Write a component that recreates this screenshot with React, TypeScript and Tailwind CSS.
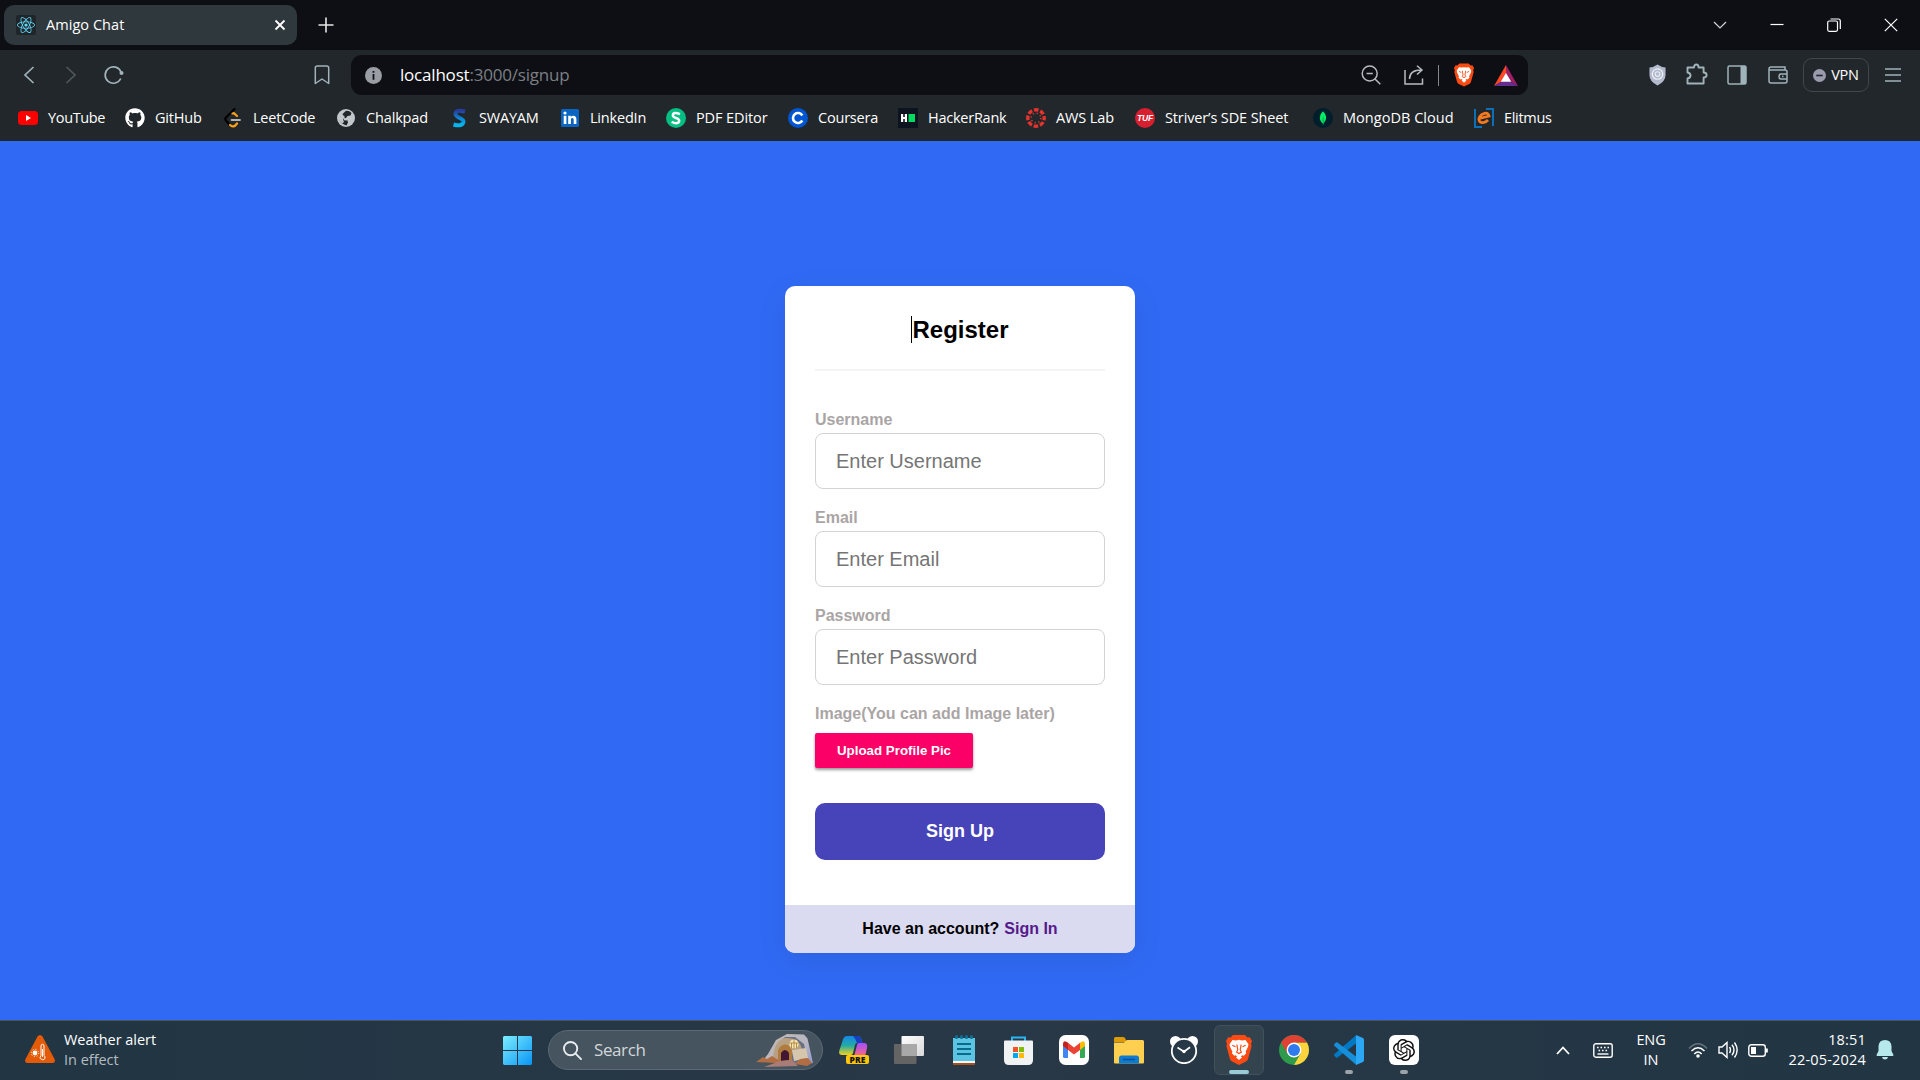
import type { ReactNode } from "react";
import { FaGithub, FaReact } from "react-icons/fa";
import { SiMongodb, SiOpenai } from "react-icons/si";

function BraveMark({ className }: { className: string }) {
  return (
    <svg viewBox="0 0 26 30" className={className}>
      <path d="M7 0h12l2.500 2.600 2.300-.3L26 6l-1 3 .6 2-3.400 12.500c-.4 1.400-1.200 2.400-2.300 3.100L13 30l-6.900-3.400c-1.100-.7-1.900-1.700-2.300-3.100L.4 11 1 9 0 6l2.200-3.700 2.300.3z" fill="#fb4a12" />
      <path d="M13 4.800l3 .6 3.500-.4 3 4.200-.5 2.600-2.300 4.700.3 2.100-2.300 2.200-1.700-.5-3 3.500-3-3.500-1.700.5L6 18.600l.3-2.100L4 11.800l-.5-2.600 3-4.200 3.500.4z" fill="#fff" />
      <path d="M10.800 9.500L11.800 15l-1.200 2L13 18.500 15.400 17l-1.200-2 1-5.500M6.300 10.300l3.200 1.500M19.700 10.300l-3.200 1.500" stroke="#fb4a12" strokeWidth="1.200" fill="none" />
      <path d="M9.800 22.300l3.200-1.800 3.200 1.800L13 25z" fill="#fff" />
    </svg>
  );
}

const bookmarks: { label: string; cell: string; text: string; icon: ReactNode }[] = [
  {
    label: "YouTube",
    cell: "w-[107px]",
    text: "tracking-[-0.35px]",
    icon: (
      <svg viewBox="0 0 20 20" className="size-5">
        <rect y="3" width="20" height="14" rx="3.500" fill="#f00" />
        <path d="M8 7v6l5-3z" fill="#fff" />
      </svg>
    ),
  },
  { label: "GitHub", cell: "w-[98px]", text: "", icon: <FaGithub className="size-5 text-white" /> },
  {
    label: "LeetCode",
    cell: "w-[113px]",
    text: "",
    icon: (
      <svg viewBox="0 0 20 20" className="size-5" fill="none" strokeWidth="2.200" strokeLinecap="round">
        <path d="M11.500 1L3 9.500q-1.500 1.500 0 3l4 5" stroke="#000" />
        <path d="M9.500 5.500l1.500-.3L14 8M7 17q3.500 3.500 7-1.500" stroke="#ffa116" />
        <path d="M8.500 12H17" stroke="#b3b3b3" strokeWidth="1.800" />
      </svg>
    ),
  },
  {
    label: "Chalkpad",
    cell: "w-[113px]",
    text: "tracking-[-0.15px]",
    icon: (
      <svg viewBox="0 0 20 20" className="size-5">
        <circle cx="10" cy="10" r="9" fill="#c2c7cb" />
        <path d="M10 2.800q3.500-.3 5.500 2.200l-1 2.500-3 .5-1.500 2-2.500.3.500 2 3.500.2.500 2-1.500 3Q5 15.500 3.500 12l-.7-2.500 3.200.7 1.500-2L6.500 6z" fill="#22272b" />
        <path d="M3 8l4.500-.5 1.500 1.500-2 2.500L8 14l-2 1.500L3 12z" fill="#c2c7cb" />
      </svg>
    ),
  },
  {
    label: "SWAYAM",
    cell: "w-[111px]",
    text: "",
    icon: (
      <svg viewBox="0 0 20 20" className="size-5">
        <defs>
          <linearGradient id="swayam" x1="0" y1="0" x2="0" y2="1">
            <stop stopColor="#283c9b" />
            <stop offset=".6" stopColor="#078fdc" />
            <stop offset="1" stopColor="#06b7ee" />
          </linearGradient>
        </defs>
        <path d="M16 3.500Q6.300 1 6.500 6c.2 4 8.500 4 8 7.600Q13.500 19 4.500 16.500" fill="none" stroke="url(#swayam)" strokeWidth="4" />
      </svg>
    ),
  },
  {
    label: "LinkedIn",
    cell: "w-[106px]",
    text: "",
    icon: (
      <svg viewBox="0 0 20 20" className="size-5">
        <rect x="1" y="1" width="18" height="18" rx="1.500" fill="#0a66c2" />
        <circle cx="5" cy="5" r="1.600" fill="#fff" />
        <path d="M3.700 7.800h2.700V16H3.700zM8.200 7.800h2.600v1.200c1.300-2.100 5.600-2 5.600 2.300V16h-2.700v-4.200c0-2.500-2.800-2.300-2.800 0V16H8.200z" fill="#fff" />
      </svg>
    ),
  },
  {
    label: "PDF EDitor",
    cell: "w-[122px]",
    text: "tracking-[-0.1px]",
    icon: (
      <svg viewBox="0 0 20 20" className="size-5">
        <circle cx="10" cy="10" r="10" fill="#06be82" />
        <path d="M14 6.200Q7 3.300 6.900 7.400c0 3 6.300 2.100 6.300 5.200 0 3.700-4.800 3-7.500 1.200" fill="none" stroke="#fff" strokeWidth="2.500" />
      </svg>
    ),
  },
  {
    label: "Coursera",
    cell: "w-[110px]",
    text: "",
    icon: (
      <svg viewBox="0 0 20 20" className="size-5">
        <circle cx="10" cy="10" r="10" fill="#0056d2" />
        <path d="M14.300 12.500a5 5 0 1 1 0-5" fill="none" stroke="#fff" strokeWidth="2.600" />
      </svg>
    ),
  },
  {
    label: "HackerRank",
    cell: "w-[128px]",
    text: "tracking-[-0.25px]",
    icon: (
      <svg viewBox="0 0 20 20" className="size-5">
        <path d="M0 0h20v20H0z" fill="#0b141f" />
        <path d="M3 6h2.200v3h1.600V6H9v8H6.800v-3H5.200v3H3z" fill="#fff" />
        <path d="M10.500 6H17v8h-6.500z" fill="#05d95f" />
      </svg>
    ),
  },
  {
    label: "AWS Lab",
    cell: "w-[109px]",
    text: "tracking-[-0.1px]",
    icon: (
      <svg viewBox="0 0 20 20" className="size-5">
        <circle cx="10" cy="10" r="8.200" fill="none" stroke="#e4342b" strokeWidth="3.400" strokeDasharray="4.600 1.840" strokeDashoffset="2.300" />
        <circle cx="10" cy="10" r="4.800" fill="none" stroke="#e4342b" strokeWidth="1.400" strokeDasharray="1.300 2.470" />
      </svg>
    ),
  },
  {
    label: "Striver’s SDE Sheet",
    cell: "w-[178px]",
    text: "tracking-[-0.13px]",
    icon: (
      <span className="flex size-5 items-center justify-center rounded-full bg-[#d81f30] font-['Liberation_Sans'] text-[8.5px] font-bold tracking-[-0.1px] text-white italic">
        TUF
      </span>
    ),
  },
  {
    label: "MongoDB Cloud",
    cell: "w-[161px]",
    text: "tracking-[0.03px]",
    icon: (
      <span className="flex size-5 items-center justify-center rounded-full bg-[#001e2b]">
        <SiMongodb className="size-3.5 text-[#00ed64]" />
      </span>
    ),
  },
  {
    label: "Elitmus",
    cell: "w-[100px]",
    text: "tracking-[-0.3px]",
    icon: (
      <svg viewBox="0 0 20 20" className="size-5">
        <path d="M1 1v18h7M12 1h7v17" fill="none" stroke="#0d6fb8" strokeWidth="2" />
        <path d="M5.500 10.500L15 8q-1-3.500-4.500-2.700C6 6.500 4 10.500 5.300 13c1.500 2.500 6 2 8.700-1" fill="none" stroke="#f47a20" strokeWidth="2.800" />
      </svg>
    ),
  },
];

function TabStrip() {
  return (
    <div className="flex h-[50px] items-center bg-[#0d0f14] pl-1 text-white">
      <div className="flex h-10 w-[293px] items-center rounded-[10px] bg-[#2f383d] pr-[11px] pl-3">
        <span className="flex size-5 items-center justify-center rounded-[2px] bg-[#20252a]">
          <FaReact className="size-[18px] text-[#61dafb]" />
        </span>
        <span className="ml-2.5 flex-1 text-[14.5px] tracking-[0.05px]">Amigo Chat</span>
        <svg viewBox="0 0 12 12" className="size-3" stroke="#fff" strokeWidth="1.800">
          <path d="M1.500 1.500l9 9M10.500 1.500l-9 9" />
        </svg>
      </div>
      <svg viewBox="0 0 16 16" className="ml-[21px] size-4" stroke="#e8e8e8" strokeWidth="1.600">
        <path d="M8 .500v15M.500 8h15" />
      </svg>
      <div className="ml-auto flex">
        <span className="flex w-[57px] justify-center">
          <svg viewBox="0 0 14 14" className="size-3.5" fill="none" stroke="#d5d5d5" strokeWidth="1.200">
            <path d="M1 4l6 6 6-6" />
          </svg>
        </span>
        <span className="flex w-[57px] justify-center">
          <svg viewBox="0 0 14 14" className="size-3.5" fill="none" stroke="#fff" strokeWidth="1.200">
            <path d="M.500 6.500h13" />
          </svg>
        </span>
        <span className="flex w-[57px] justify-center">
          <svg viewBox="0 0 14 14" className="size-3.5" fill="none" stroke="#fff" strokeWidth="1.200">
            <rect x=".7" y="3" width="9.800" height="10.300" rx="1.500" />
            <path d="M3.500 1h7.800q2 0 2 2v8" />
          </svg>
        </span>
        <span className="flex w-[58px] justify-center">
          <svg viewBox="0 0 14 14" className="size-3.5" fill="none" stroke="#fff" strokeWidth="1.200">
            <path d="M.800 .800l12.400 12.400M13.200 .800L.800 13.200" />
          </svg>
        </span>
      </div>
    </div>
  );
}

function Slot({ children, className }: { children: ReactNode; className: string }) {
  return <span className={`flex shrink-0 items-center justify-center ${className}`}>{children}</span>;
}

function Toolbar() {
  return (
    <div className="flex h-[50px] items-center pl-2">
      <Slot className="w-[42px]">
        <svg viewBox="0 0 12 18" className="h-[18px] w-3" fill="none" stroke="#a0b2ba" strokeWidth="1.700">
          <path d="M10.500 1L2 9l8.500 8" />
        </svg>
      </Slot>
      <Slot className="w-[42px]">
        <svg viewBox="0 0 12 18" className="h-[18px] w-3" fill="none" stroke="#4e575c" strokeWidth="1.700">
          <path d="M1.500 1L10 9l-8.500 8" />
        </svg>
      </Slot>
      <Slot className="w-11">
        <svg viewBox="0 0 20 20" className="size-5" fill="none" stroke="#a0b2ba" strokeWidth="1.700">
          <path d="M16.800 13.500A8.200 8.200 0 1 1 17 7" />
          <circle cx="17.500" cy="8" r="2" fill="#a0b2ba" stroke="none" />
        </svg>
      </Slot>
      <Slot className="ml-[165px] w-[42px]">
        <svg viewBox="0 0 16 20" className="h-5 w-4" fill="none" stroke="#a0b2ba" strokeWidth="1.500">
          <path d="M1.300 18.500V3q0-2 2-2h9.400q2 0 2 2v15.500L8 14z" strokeLinejoin="round" />
        </svg>
      </Slot>
      <div className="ml-2 flex h-10 w-[1177px] items-center rounded-[11px] bg-[#0d0f14] pl-[14px]">
        <svg viewBox="0 0 18 18" className="size-[17px]">
          <circle cx="9" cy="9" r="9" fill="#9a9da3" />
          <path d="M9 4.200v1.800M9 7.500v6" stroke="#0d0f14" strokeWidth="1.900" />
        </svg>
        <span className="ml-[18px] flex-1 pb-px text-[17px] tracking-[-0.2px] text-[#7c7f84]">
          <span className="text-white">localhost</span>:3000/signup
        </span>
        <Slot className="w-[43px]">
          <svg viewBox="0 0 20 20" className="size-5" fill="none" stroke="#b6bbbd" strokeWidth="1.500">
            <circle cx="8.700" cy="8.500" r="7.500" />
            <path d="M14 14l5.300 5.200M5.500 8.500h6.300" />
          </svg>
        </Slot>
        <Slot className="w-[43px]">
          <svg viewBox="0 0 20 20" className="size-5" fill="none" stroke="#b6bbbd" strokeWidth="1.500">
            <path d="M1 5v14h17.500v-5.500M5.500 14Q5.500 5 17.500 5M13 .8L18 5l-5 4.500" />
          </svg>
        </Slot>
        <span className="ml-[3px] h-[21px] w-px bg-[#85878a]" />
        <Slot className="ml-[3px] w-[43px]">
          <BraveMark className="h-6 w-5" />
        </Slot>
        <Slot className="mr-px w-[42px]">
          <svg viewBox="0 0 24 21" className="h-[21px] w-6">
            <path d="M12 0L0 21l12-7z" fill="#ff4724" />
            <path d="M12 0l12 21-12-7z" fill="#9e1f63" />
            <path d="M0 21h24l-12-7z" fill="#662d91" />
            <path d="M12 8l5.200 8.700H6.800z" fill="#fff" />
          </svg>
        </Slot>
      </div>
      <Slot className="ml-[109px] w-10">
        <svg viewBox="0 0 18 22" className="h-[22px] w-[17px]">
          <path d="M9 0q4 3 8.500 3v8q0 7-8.500 11Q.5 18 .5 11V3Q5 3 9 0z" fill="#b4bacd" />
          <circle cx="9" cy="10" r="5.500" fill="none" stroke="#eef0f5" strokeWidth="1.300" />
          <circle cx="9" cy="10" r="2.500" fill="none" stroke="#e8eaf2" strokeWidth="1.200" />
        </svg>
      </Slot>
      <Slot className="w-10">
        <svg viewBox="0 0 22 22" className="mb-0.5 size-[22px]" fill="none" stroke="#a0b2ba" strokeWidth="1.900" strokeLinejoin="round">
          <path d="M1.500 4.500H8q0-3 2.300-3t2.300 3h5v5q3 0 3 2.500t-3 2.500v6H1.500v-5q3-.5 3-3t-3-3z" />
        </svg>
      </Slot>
      <Slot className="w-10">
        <svg viewBox="0 0 20 20" className="size-5">
          <rect x="1" y="1" width="18" height="18" rx="1.500" fill="none" stroke="#a0b2ba" strokeWidth="1.500" />
          <path d="M13.500 1H19v18h-5.500z" fill="#a0b2ba" />
        </svg>
      </Slot>
      <Slot className="w-[42px]">
        <svg viewBox="0 0 20 20" className="size-5" fill="none" stroke="#a0b2ba" strokeWidth="1.500">
          <path d="M17 5V2H3Q1 2 1 4v12q0 2 2 2h14q2 0 2-2V7q0-2-2-2H1M19 9h-6q-2 0-2 2.500t2 2.500h6M14 11.500h1.500" />
        </svg>
      </Slot>
      <div className="ml-1 flex h-[34px] w-[66px] items-center justify-center gap-[5px] rounded-[9px] border border-[#3d474c] text-[14.5px] tracking-[-0.2px] text-white">
        <svg viewBox="0 0 12 12" className="size-[13px]">
          <circle cx="6" cy="6" r="6" fill="#9b9bb0" />
          <path d="M3 6h6" stroke="#22272b" strokeWidth="1.500" />
        </svg>
        VPN
      </div>
      <Slot className="w-12">
        <svg viewBox="0 0 16 14" className="h-3.5 w-4" stroke="#a0b2ba" strokeWidth="1.400">
          <path d="M0 1h16M0 7h16M0 13h16" />
        </svg>
      </Slot>
    </div>
  );
}

function Field({ label, placeholder, type }: { label: string; placeholder: string; type: string }) {
  return (
    <label className="mb-5 block h-[78px] text-base leading-[18px] font-bold text-[#aaa5a5]">
      {label}
      <input
        type={type}
        placeholder={placeholder}
        className="mt-1 block h-14 w-full rounded-lg border border-[#d3d3d3] bg-white px-5 text-xl font-normal placeholder:text-[#757575] placeholder:opacity-100"
      />
    </label>
  );
}

function SignupCard() {
  return (
    <div className="mt-[144.5px] h-[667.5px] w-[350px] overflow-hidden rounded-[10px] bg-white px-[30px] font-['Liberation_Sans',Arial,sans-serif] shadow-[0_8px_30px_rgba(0,0,0,0.08)]">
      <div className="flex h-[85.5px] justify-center border-b-[2.5px] border-[#f6f3f3] pt-[30.500px]">
        <h1 className="flex h-[27px] border-l border-black text-2xl leading-7 font-bold text-black">Register</h1>
      </div>
      <form className="pt-[40px]">
        <Field label="Username" placeholder="Enter Username" type="text" />
        <Field label="Email" placeholder="Enter Email" type="email" />
        <Field label="Password" placeholder="Enter Password" type="password" />
        <p className="text-base leading-[18px] font-bold text-[#aaa5a5]">Image(You can add Image later)</p>
        <button
          type="button"
          className="mt-[9.5px] block h-[35px] w-[158px] rounded-[2px] bg-[#fb0066] pt-px text-[13.33px] font-bold text-white shadow-[0_2px_3px_rgba(0,0,0,0.4)]"
        >
          Upload Profile Pic
        </button>
        <button type="button" className="mt-[35px] block h-[57px] w-full rounded-[10px] bg-[#4743b9] text-lg font-bold text-white">
          Sign Up
        </button>
      </form>
      <div className="-mx-[30px] mt-[45px] flex h-[48.5px] items-center justify-center gap-[5px] bg-[#dadaf0] pt-px text-base font-bold text-black">
        Have an account? <a className="text-[#551a8b]">Sign In</a>
      </div>
    </div>
  );
}

function TaskbarApps() {
  return (
    <div className="flex items-center">
      <Slot className="w-[55px]">
        <svg viewBox="0 0 30 28" className="h-[28px] w-[30px]">
          <defs>
            <linearGradient id="copA" x1="0" y1="0" x2="0" y2="1">
              <stop stopColor="#1687e8" />
              <stop offset=".5" stopColor="#23aaa5" />
              <stop offset="1" stopColor="#f1d020" />
            </linearGradient>
            <linearGradient id="copB" x1="0" y1="0" x2="0" y2="1">
              <stop stopColor="#a34dff" />
              <stop offset="1" stopColor="#ff6b75" />
            </linearGradient>
          </defs>
          <path d="M8 0h11q2.500 0 3.500 3.500L23.500 7H18q-1.500 0-2 2l-2 8q-.6 2-2 2H3q-4 0-2.500-5L4 3.500Q5 0 8 0z" fill="url(#copA)" />
          <path d="M14 0h5q2.500 0 3.500 3.500L23.500 7H18q-2-5-4-7z" fill="#1740c0" />
          <path d="M19 7h6q4 0 3 5l-2 9H13q2 0 3-4l2-8z" fill="url(#copB)" />
          <rect x="7" y="19" width="23" height="9" rx="2" fill="#fdc70c" />
          <text x="18.500" y="26.600" textAnchor="middle" fontFamily="Open Sans" fontSize="8.500" fontWeight="800" fill="#161616">PRE</text>
        </svg>
      </Slot>
      <Slot className="w-[55px]">
        <svg viewBox="0 0 30 28" className="h-[28px] w-[30px]">
          <defs>
            <linearGradient id="tv" x1="0" y1="0" x2="1" y2="1">
              <stop stopColor="#fff" />
              <stop offset="1" stopColor="#d8d8d8" />
            </linearGradient>
          </defs>
          <rect x="7.500" y="0" width="22.500" height="20" rx="1" fill="url(#tv)" />
          <rect x="0" y="8" width="22.500" height="20" rx="1" fill="#646464" />
          <path d="M7.500 8h15v12h-15z" fill="#a8a8a8" />
        </svg>
      </Slot>
      <Slot className="w-[55px]">
        <svg viewBox="0 0 22 30" className="h-[30px] w-[22px]">
          <rect y="20" width="22" height="10" rx="1" fill="#a4521c" />
          <path d="M0 20h22v8H0z" fill="#f5f5f5" />
          <path d="M0 3h22v23H0z" fill="#5bc4e3" />
          <path d="M4 9h14M4 14h14M4 19h14" stroke="#096a8c" strokeWidth="2" />
          <path d="M3.500 1.500v1M8.500 1.500v1M13.500 1.500v1M18.500 1.500v1" stroke="#0a6f92" strokeWidth="3" strokeLinecap="round" />
        </svg>
      </Slot>
      <Slot className="w-[55px]">
        <svg viewBox="0 0 29 29" className="size-[29px]">
          <path d="M8 6V1.500h13V6" fill="none" stroke="#29b6f2" strokeWidth="2" />
          <path d="M0 5.500q0-1 1-1h27q1 0 1 1V24q0 5-5 5H5q-5 0-5-5z" fill="#f1f2f3" />
          <path d="M9 11h5v5H9z" fill="#f35325" />
          <path d="M15 11h5v5h-5z" fill="#81bc06" />
          <path d="M9 17h5v5H9z" fill="#05a6f0" />
          <path d="M15 17h5v5h-5z" fill="#ffba08" />
        </svg>
      </Slot>
      <Slot className="w-[55px]">
        <svg viewBox="0 0 30 30" className="size-[30px]">
          <rect width="30" height="30" rx="6.500" fill="#fff" />
          <path d="M4 10.500l5 3.700V23H5.500Q4 23 4 21.500z" fill="#4285f4" />
          <path d="M26 10.500l-5 3.700V23h3.500q1.500 0 1.500-1.500z" fill="#34a853" />
          <path d="M21 7.800l1.500-1.100Q26 5 26 9v2l-5 4z" fill="#fbbc04" />
          <path d="M9 7.800L7.500 6.700Q4 5 4 9v2l5 4z" fill="#c5221f" />
          <path d="M9 7.800l6 4.700 6-4.700V15l-6 4.500L9 15z" fill="#ea4335" />
        </svg>
      </Slot>
      <Slot className="w-[55px]">
        <svg viewBox="0 0 30 27" className="h-[27px] w-[30px]">
          <path d="M0 1.500Q0 0 1.500 0h8q1.500 0 2.500 3l1 2H0z" fill="#dd9a05" />
          <path d="M0 5.500h10L13 3h15.500Q30 3 30 4.500V25.500q0 1-1 1H1q-1 0-1-1z" fill="#ffd050" />
          <path d="M5 26.500V21q0-2.500 2.500-2.500h15Q25 18.500 25 21v5.500z" fill="#0f7ad1" />
          <path d="M9 22.500h12" stroke="#075298" strokeWidth="1.500" />
        </svg>
      </Slot>
      <Slot className="w-[55px]">
        <svg viewBox="0 0 28 28" className="size-7">
          <circle cx="5.500" cy="5.500" r="5.500" fill="#fff" />
          <circle cx="22.500" cy="5.500" r="5.500" fill="#fff" />
          <circle cx="14" cy="15" r="12.200" fill="#273846" stroke="#fff" strokeWidth="1.800" />
          <path d="M7.500 11.500l6.500 4.200 6-4.500" fill="none" stroke="#fff" strokeWidth="1.800" />
          <circle cx="14" cy="15.500" r="1.700" fill="#fff" />
        </svg>
      </Slot>
      <Slot className="w-[55px]">
        <span className="flex h-[50px] w-[50px] flex-col items-center rounded-md border border-[#40505c] bg-[#34444f] pt-[9px]">
          <BraveMark className="h-[30px] w-[26px]" />
          <span className="mt-[5px] h-1 w-5 rounded-full bg-[#98cbd5]" />
        </span>
      </Slot>
      <Slot className="w-[55px]">
        <svg viewBox="0 0 30 30" className="size-[30px]">
          <circle cx="15" cy="15" r="15" fill="#2d9b4b" />
          <path d="M15 7.500H27.990A15 15 0 0 1 15 30L21.500 18.750z" fill="#fdd43c" />
          <path d="M2.010 7.500A15 15 0 0 1 27.990 7.500H15L8.500 18.750z" fill="#dd4235" />
          <circle cx="15" cy="15" r="7.400" fill="#fff" />
          <circle cx="15" cy="15" r="6" fill="#2f7bee" />
        </svg>
      </Slot>
      <Slot className="w-[55px]">
        <span className="flex h-[50px] flex-col items-center pt-[10px]">
          <svg viewBox="0 0 30 30" className="size-[30px]">
            <path d="M22 .3v8.200L3.500 22.500q-.8.500-1.500 0L.5 21q-1-1 0-2z" fill="#0079c4" />
            <path d="M22 29.700v-8.200L3.500 7.500Q2.700 7 2 7.500L.5 9q-1 1 0 2z" fill="#168fd8" />
            <path d="M22 0l7 3q1 .5 1 2v20q0 1.500-1 2l-7 3z" fill="#2ca7f5" />
          </svg>
          <span className="mt-[5px] h-1 w-2 rounded-full bg-[#9ba3a9]" />
        </span>
      </Slot>
      <Slot className="w-[55px]">
        <span className="flex h-[50px] flex-col items-center pt-[10px]">
          <span className="flex size-[30px] items-center justify-center rounded-md bg-white">
            <SiOpenai className="size-[22px] text-[#111]" />
          </span>
          <span className="mt-[5px] h-1 w-2 rounded-full bg-[#9ba3a9]" />
        </span>
      </Slot>
    </div>
  );
}

function Taskbar() {
  return (
    <div className="flex h-[60px] items-center border-t border-[#4a565c] bg-linear-to-r from-[#213543] via-[#293847] to-[#213543] pb-px text-white">
      <div className="flex w-[503px] items-center pl-[25px]">
        <svg viewBox="0 0 30 28" className="mb-0.5 h-7 w-[30px]">
          <path d="M12.500 1.500q2.500-3 5 0L29.500 24q1.500 4-2 4h-25q-3.500 0-2-4z" fill="#e35b06" />
          <circle cx="10" cy="18" r="2.400" fill="#fff" />
          <circle cx="10" cy="18" r="3.700" fill="none" stroke="#fff" strokeWidth="1" strokeDasharray="1 1.900" />
          <path d="M16 20.500V11q0-1.700 1.500-1.700T19 11v9.500q1.500 1 .8 2.900t-2.300 1.300-2.300-1.300.8-2.900zM17.500 14v8" fill="none" stroke="#fff" strokeWidth="1" />
        </svg>
        <div className="ml-[9px] pb-px text-[14.5px] leading-5 tracking-[-0.02px]">
          <div>Weather alert</div>
          <div className="text-[#b5bdc2]">In effect</div>
        </div>
      </div>
      <svg viewBox="0 0 29 29" className="size-[29px] shrink-0">
        <defs>
          <linearGradient id="win" x1="0" y1="0" x2="1" y2="1">
            <stop stopColor="#7ceeff" />
            <stop offset="1" stopColor="#0894f5" />
          </linearGradient>
        </defs>
        <path d="M1 0h13v14H0V1zM15 0h13l1 1v13H15zM0 15h14v14H1l-1-1zM15 15h14v13l-1 1H15z" fill="url(#win)" />
      </svg>
      <div className="ml-4 flex h-10 w-[275px] items-center rounded-full border border-[#5c6974] bg-[#46545f] pr-[9px] pl-[14px]">
        <svg viewBox="0 0 20 20" className="size-[19px]" fill="none" stroke="#e9ecee" strokeWidth="2">
          <circle cx="8" cy="8" r="7" />
          <path d="M13 13l6 6" strokeLinecap="round" />
        </svg>
        <span className="ml-3 flex-1 text-[17px] tracking-[-0.4px] text-[#d2d7da]">Search</span>
        <svg viewBox="0 0 57 34" className="h-[34px] w-[57px]">
          <defs>
            <linearGradient id="rock" x1="0" y1="0" x2="1" y2="1">
              <stop stopColor="#c5b9ae" />
              <stop offset=".6" stopColor="#b7b6c4" />
              <stop offset="1" stopColor="#8f9bd0" />
            </linearGradient>
          </defs>
          <path d="M8 26l4-5L20 7 31 1l17 .5 3.500 4L57 30l-8 1-35-2z" fill="url(#rock)" />
          <path d="M17 27L20 13l9-9h10l9 7 3 14-4 4-20 3z" fill="#687083" />
          <path d="M17 28q0-20 12-23 14-1 17 11l-9 1-2 13-12 2z" fill="#b7a182" />
          <path d="M22 28V17q4-7 10-5l4 5v12l-6 3z" fill="#b07c3e" />
          <path d="M25 28V20q4-6 8 0v7z" fill="#431535" />
          <path d="M36 17l14-2 2 10-14 3z" fill="#d6c6ad" />
          <circle cx="38" cy="11" r="4.600" fill="#f7e5b2" />
          <path d="M33.500 10h9M38 6v10M35.500 10v5M40.500 10v5" stroke="#a27630" strokeWidth=".8" />
          <path d="M0 29l7-5 4 2 5-3 8 5-4 2zM39 31l5-5 8-1 4 5-5 3z" fill="#b36d42" />
          <path d="M8 34l16-6 12-1 6 6z" fill="#aa7c77" />
        </svg>
      </div>
      <div className="ml-[3px]">
        <TaskbarApps />
      </div>
      <div className="ml-auto flex items-center">
        <Slot className="mr-4 w-5">
          <svg viewBox="0 0 14 9" className="h-[9px] w-3.5" fill="none" stroke="#fff" strokeWidth="1.800">
            <path d="M1 8l6-6.500L13 8" />
          </svg>
        </Slot>
        <Slot className="mr-[23px] ml-1 w-5">
          <svg viewBox="0 0 20 15" className="h-[15px] w-5" fill="none" stroke="#fff" strokeWidth="1.400">
            <rect x=".8" y=".8" width="18.400" height="13.400" rx="2" />
            <path d="M4 4.500h12" strokeDasharray="1.600 1.900" strokeWidth="1.600" />
            <path d="M5.500 7.500h10" strokeDasharray="1.600 1.900" strokeWidth="1.600" />
            <path d="M4.500 11h11" />
          </svg>
        </Slot>
        <div className="w-[30px] text-center text-[14.5px] leading-5 tracking-[-0.1px]">
          ENG
          <br />
          IN
        </div>
        <Slot className="ml-[22px] w-5">
          <svg viewBox="0 0 20 15" className="h-[15px] w-5" fill="none" stroke="#fff" strokeWidth="1.500">
            <path d="M1 5.500q9-9.500 18 0" stroke="#65737d" />
            <path d="M3.500 8q6.500-6.500 13 0M6.300 11q3.700-4 7.400 0" />
            <circle cx="10" cy="13" r="1.800" fill="#fff" stroke="none" />
          </svg>
        </Slot>
        <Slot className="ml-2.5 w-5">
          <svg viewBox="0 0 20 18" className="h-[18px] w-5" fill="none" stroke="#fff" strokeWidth="1.400">
            <path d="M1 6h3l5-4.500v15L4 12H1zM11.500 6q2 3 0 6M14 3.800q4 5.200 0 10.400M16.500 1.500q5.300 7.500 0 15" />
          </svg>
        </Slot>
        <Slot className="ml-2.5 w-5">
          <svg viewBox="0 0 20 13" className="h-[13px] w-5" fill="none" stroke="#fff" strokeWidth="1.400">
            <rect x=".8" y=".8" width="16.500" height="11.400" rx="2.500" />
            <path d="M3 3h5v7H3z" fill="#fff" stroke="none" />
            <path d="M18.800 4.500v4" strokeWidth="2" />
          </svg>
        </Slot>
        <div className="ml-[18px] w-20 pb-px text-right text-[14.5px] leading-5 tracking-[0.18px] whitespace-nowrap">
          18:51
          <br />
          22-05-2024
        </div>
        <Slot className="mr-[26px] ml-[10px] w-[18px]">
          <svg viewBox="0 0 18 20" className="h-5 w-[18px]">
            <path d="M9 0q6 0 6.500 6v5L17.500 15q0 1-1 1h-15q-1 0-1-1L2.500 11V6Q3 0 9 0zM6 17h6q-.5 2.500-3 2.500T6 17z" fill="#b7e8ec" />
          </svg>
        </Slot>
      </div>
    </div>
  );
}

export default function App() {
  return (
    <div className="flex h-[1080px] w-[1920px] flex-col overflow-hidden bg-[#22272b] font-['Open_Sans',sans-serif]">
      <TabStrip />
      <Toolbar />
      <nav className="flex h-[41px] items-center pb-[5px] pl-[18px] text-[14.5px] tracking-[-0.2px] text-white">
        {bookmarks.map((b) => (
          <a key={b.label} className={`flex shrink-0 items-center gap-2.5 whitespace-nowrap ${b.cell}`}>
            <span className="shrink-0">{b.icon}</span>
            <span className={b.text}>{b.label}</span>
          </a>
        ))}
      </nav>
      <main className="flex h-[879px] items-start justify-center bg-[#306af4]">
        <SignupCard />
      </main>
      <Taskbar />
    </div>
  );
}
